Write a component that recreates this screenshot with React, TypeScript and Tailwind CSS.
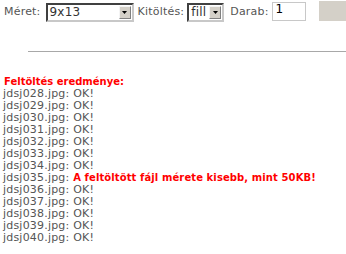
import React from "react"

const files = [
  "jdsj028.jpg", "jdsj029.jpg", "jdsj030.jpg", "jdsj031.jpg", "jdsj032.jpg",
  "jdsj033.jpg", "jdsj034.jpg", "jdsj035.jpg", "jdsj036.jpg", "jdsj037.jpg",
  "jdsj038.jpg", "jdsj039.jpg", "jdsj040.jpg",
]

function Arrow() {
  return (
    <span className="flex h-[13px] w-[12px] items-center justify-center border border-t-[#f4f4f4] border-l-[#f4f4f4] border-r-[#808080] border-b-[#808080] bg-[#d4d0c8]">
      <svg width="5" height="3" viewBox="0 0 5 3"><path d="M0 0h5L2.5 3z" fill="#000" /></svg>
    </span>
  )
}

function Select({ value, width }: { value: string; width: string }) {
  return (
    <div className={`flex h-[19px] items-center justify-between border-2 border-t-[#404040] border-l-[#404040] border-r-[#c8c8c8] border-b-[#c8c8c8] bg-white pr-[1px] ${width}`}>
      <span className="pl-[2px] text-[12px] leading-none text-[#333]">{value}</span>
      <Arrow />
    </div>
  )
}

export default function App() {
  return (
    <div className="h-[254px] w-[346px] overflow-hidden bg-white font-['DejaVu_Sans',Verdana,sans-serif] text-[11px] text-[#555]">
      <div className="flex h-[24px] items-center pl-[4px] tracking-[0.2px]">
        <span className="mr-[5px]">Méret:</span>
        <Select value="9x13" width="w-[88px]" />
        <span className="ml-[4px] mr-[3px]">Kitöltés:</span>
        <Select value="fill" width="w-[37px]" />
        <span className="ml-[6px] mr-[3px]">Darab:</span>
        <div className="mb-[2px] h-[19px] w-[34px] border border-[#c8c8c8] bg-white pl-[3px] text-[12px] leading-[13px] text-[#000]">1</div>
        <div className="mb-[2px] ml-[13px] h-[20px] flex-1 bg-[#d4d0c8]" />
      </div>
      <div className="ml-[28px] mt-[27px] h-px bg-[#a8a8a8]" />
      <div className="mt-[24px] pl-[3px] leading-[12px] tracking-[0.2px]">
        <div className="pl-px text-[10px] font-bold tracking-normal text-[#ff0000]">Feltöltés eredménye:</div>
        {files.map((f) => (
          <div key={f}>
            {f}:{" "}
            {f === "jdsj035.jpg" ? (
              <span className="text-[10px] font-bold tracking-[0.1px] text-[#ff0000]">A feltöltött fájl mérete kisebb, mint 50KB!</span>
            ) : (
              "OK!"
            )}
          </div>
        ))}
      </div>
    </div>
  )
}
